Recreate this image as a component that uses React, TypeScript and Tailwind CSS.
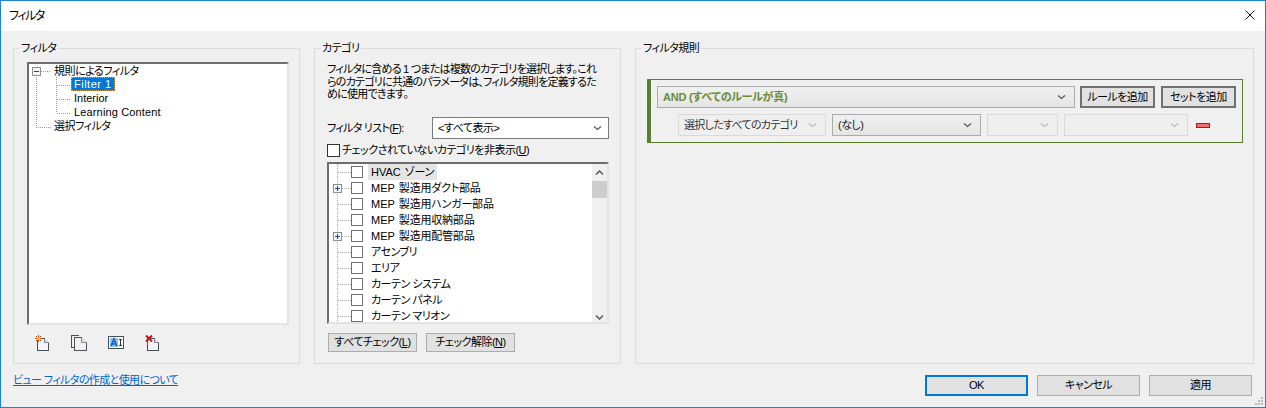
const FONT = "font-['Liberation_Sans','Noto_Sans_CJK_JP',sans-serif] [font-feature-settings:'palt']";

const categories = [
  { latin: "HVAC", label: "ゾーン", plus: false },
  { latin: "MEP", label: "製造用ダクト部品", plus: true },
  { latin: "MEP", label: "製造用ハンガー部品", plus: false },
  { latin: "MEP", label: "製造用収納部品", plus: false },
  { latin: "MEP", label: "製造用配管部品", plus: true },
  { latin: "", label: "アセンブリ", plus: false },
  { latin: "", label: "エリア", plus: false },
  { latin: "", label: "カーテン システム", plus: false },
  { latin: "", label: "カーテン パネル", plus: false },
  { latin: "", label: "カーテン マリオン", plus: false },
];

function Chevron({ color = "#555" }: { color?: string }) {
  return (
    <svg width="9" height="6" viewBox="0 0 9 6" className="shrink-0">
      <path d="M1 1.5 L4.5 4.5 L8 1.5" fill="none" stroke={color} strokeWidth="1.2" />
    </svg>
  );
}

function Button({ label, className }: { label: React.ReactNode; className: string }) {
  return (
    <button className={`flex items-center justify-center whitespace-nowrap bg-[#e1e1e1] text-black ${className}`}>
      {label}
    </button>
  );
}

function Combo({ label, width, disabled, className = "" }: { label?: string; width: string; disabled?: boolean; className?: string }) {
  return (
    <div
      className={`flex h-[22px] items-center justify-between whitespace-nowrap border pl-[5px] pr-[8px] ${width} ${
        disabled
          ? "border-[#d9d9d9] bg-[#efefef] text-[#333]"
          : "border-[#acacac] bg-gradient-to-b from-[#f0f0f0] to-[#e5e5e5] text-[#222]"
      } ${className}`}
    >
      <span>{label}</span>
      <Chevron color={disabled ? "#bbb" : "#555"} />
    </div>
  );
}

function Panel({ title, width, children }: { title: string; width: string; children: React.ReactNode }) {
  return (
    <fieldset className={`h-[324px] border border-[#dcdcdc] ${width}`}>
      <legend className="ml-[5px] px-[2px] leading-[16px] text-black">{title}</legend>
      {children}
    </fieldset>
  );
}

function FilterTree() {
  return (
    <div className="relative h-[263px] w-[262px] border-2 border-b-[#e3e3e3] border-l-[#6d6d6d] border-r-[#e3e3e3] border-t-[#6d6d6d] bg-white leading-[14px]">
      <svg className="absolute left-0 top-0" width="60" height="70" shapeRendering="crispEdges">
        <g stroke="#9a9a9a" strokeDasharray="1 1" fill="none">
          <path d="M7.5 11 V63.5 H23" />
          <path d="M12 7.5 H22" />
          <path d="M27.5 13 V49 M27.5 21.5 H41 M27.5 35.5 H41 M27.5 49.5 H41" />
        </g>
        <rect x="3.5" y="3.5" width="8" height="8" fill="#f6f6f6" stroke="#8f8f8f" />
        <path d="M5 7.5 H10" stroke="#2f3f8f" />
      </svg>
      <div className="h-[13px] pl-[25px]">規則によるフィルタ</div>
      <div className="ml-[42px] w-fit border border-dotted border-[#e8a050] bg-[#0078d7] px-[2px] leading-[12px] tracking-[0.5px] text-white">Filter 1</div>
      <div className="pl-[45px] tracking-[0px]">Interior</div>
      <div className="pl-[45px] tracking-[0.15px]">Learning Content</div>
      <div className="pl-[25px]">選択フィルタ</div>
    </div>
  );
}

function ToolIcons() {
  return (
    <div className="mt-[10px] flex items-start pl-[8px]">
      <svg width="16" height="17" viewBox="0 0 16 17" shapeRendering="crispEdges">
        <path d="M2.5 3.5 H9.5 L13.5 7.5 V15.5 H2.5 Z" fill="#f4f4f6" stroke="#4b5058" />
        <path d="M9.5 3.5 V7.5 H13.5" fill="#d5d8dc" stroke="#8b8f96" />
        <path d="M3.5 0 V7 M0 3.5 H7 M1 1 L6 6 M6 1 L1 6" stroke="#e04b10" />
        <rect x="2" y="2" width="3" height="3" fill="#ffc61a" />
      </svg>
      <svg className="ml-[20px]" width="16" height="17" viewBox="0 0 16 17" shapeRendering="crispEdges">
        <path d="M3.5 12.5 H0.5 V0.5 H7.5" fill="none" stroke="#4b5058" />
        <path d="M3.5 2.5 H10.5 L15.5 7.5 V15.5 H3.5 Z" fill="#f0f1f4" stroke="#4b5058" />
        <path d="M10.5 2.5 V7.5 H15.5" fill="#d5d8dc" stroke="#8b8f96" />
      </svg>
      <svg className="ml-[21px] mt-[1px]" width="17" height="14" viewBox="0 0 17 14" shapeRendering="crispEdges">
        <rect x="0.5" y="0.5" width="15" height="12" fill="#fff" stroke="#4b5058" />
        <rect x="2" y="2" width="8" height="9" fill="#8fc0ee" />
        <path d="M3.2 10 L6 3 L8.8 10 M4.2 8 H7.8" fill="none" stroke="#1566b8" strokeWidth="1.7" shapeRendering="auto" />
        <path d="M11 3.5 H14 M12.5 3.5 V9.5 M11 9.5 H14" stroke="#333" />
      </svg>
      <svg className="ml-[20px]" width="15" height="17" viewBox="0 0 15 17" shapeRendering="crispEdges">
        <path d="M2.5 3.5 H9.5 L13.5 7.5 V15.5 H2.5 Z" fill="#f4f4f6" stroke="#4b5058" />
        <path d="M9.5 3.5 V7.5 H13.5" fill="#d5d8dc" stroke="#8b8f96" />
        <path d="M1 0.5 L7 6.5 M7 0.5 L1 6.5" stroke="#c4161c" strokeWidth="2" shapeRendering="auto" />
      </svg>
    </div>
  );
}

function CategoryRow({ latin, label, plus, active }: { latin: string; label: string; plus: boolean; active: boolean }) {
  return (
    <div className="flex h-[16px] items-center pl-[4px]">
      <svg width="18" height="16" className="shrink-0" shapeRendering="crispEdges">
        <g stroke="#a6a6a6" strokeDasharray="1 1" fill="none">
          <path d="M4.5 0 V16" />
          <path d="M5 8.5 H18" />
        </g>
        {plus && (
          <g>
            <rect x="0.5" y="4.5" width="8" height="8" fill="#f4f4f4" stroke="#8f8f8f" />
            <path d="M2 8.5 H7 M4.5 6 V11" stroke="#2f3f9f" />
          </g>
        )}
      </svg>
      <span className="h-[12px] w-[12px] shrink-0 border border-[#707070] bg-white" />
      <span className={`ml-[5px] h-[16px] whitespace-nowrap px-[3px] leading-[16px] ${active ? "bg-[#e5e5e5]" : ""}`}>
        {latin && <span className="mr-[4px] tracking-[0px]">{latin}</span>}
        <span className={latin ? "tracking-[-0.2px]" : ""}>{label}</span>
      </span>
    </div>
  );
}

function CategoryList() {
  return (
    <div className="flex h-[162px] w-[282px] overflow-hidden border-2 border-b-[#e3e3e3] border-l-[#6d6d6d] border-r-[#e3e3e3] border-t-[#6d6d6d] bg-white">
      <div className="min-w-0 flex-1">
        {categories.map((c, i) => (
          <CategoryRow key={c.latin + c.label} latin={c.latin} label={c.label} plus={c.plus} active={i === 0} />
        ))}
      </div>
      <div className="flex w-[15px] shrink-0 flex-col items-center bg-[#f0f0f0]">
        <svg className="mt-[6px]" width="9" height="6" viewBox="0 0 9 6">
          <path d="M1 4.5 L4.5 1 L8 4.5" fill="none" stroke="#606060" strokeWidth="1.6" />
        </svg>
        <div className="mt-[5px] h-[17px] w-full bg-[#cdcdcd]" />
        <div className="flex-1" />
        <svg className="mb-[2px]" width="9" height="6" viewBox="0 0 9 6">
          <path d="M1 1.5 L4.5 5 L8 1.5" fill="none" stroke="#606060" strokeWidth="1.6" />
        </svg>
      </div>
    </div>
  );
}

export default function App() {
  return (
    <div className={`relative flex h-[408px] w-[1266px] flex-col overflow-hidden border border-[#1883d7] bg-[#f0f0f0] text-[11px] tracking-[-0.5px] text-black ${FONT}`}>
      <div className="flex h-[30px] shrink-0 items-center justify-between bg-white pl-[8px] pr-[10px] text-[12px] tracking-[-1.5px]">
        <span>フィルタ</span>
        <svg className="mb-[2px]" width="10" height="10" viewBox="0 0 10 10">
          <path d="M0.5 0.5 L9.5 9.5 M9.5 0.5 L0.5 9.5" stroke="#111" strokeWidth="1" />
        </svg>
      </div>

      <div className="mt-[9px] flex pl-[12px]">
        <Panel title="フィルタ" width="w-[287px]">
          <div className="pl-[13px] pt-[6px]">
            <FilterTree />
            <ToolIcons />
          </div>
        </Panel>

        <Panel title="カテゴリ" width="ml-[14px] w-[307px]">
          <div className="pl-[12px]">
            <p className="h-[48px] whitespace-nowrap pt-[7px] leading-[12.5px] tracking-[-0.75px]">
              フィルタに含める 1 つまたは複数のカテゴリを選択します。これ
              <br />
              らのカテゴリに共通のパラメータは、フィルタ規則を定義するた
              <br />
              めに使用できます。
            </p>
            <div className="mt-[13px] flex items-center">
              <span className="w-[105px] tracking-[-0.7px]">フィルタ リスト(<u>F</u>):</span>
              <div className="flex h-[22px] w-[177px] items-center justify-between border border-[#7a7a7a] bg-white pl-[5px] pr-[6px]">
                <span>&lt;すべて表示&gt;</span>
                <Chevron />
              </div>
            </div>
            <div className="mt-[4px] flex h-[15px] items-center">
              <span className="h-[13px] w-[13px] border border-[#333] bg-white" />
              <span className="ml-[2px]">チェックされていないカテゴリを非表示(<u>U</u>)</span>
            </div>
            <div className="mt-[4px]">
              <CategoryList />
            </div>
            <div className="ml-[1px] mt-[9px] flex gap-[9px]">
              <Button className="h-[19px] w-[89px] border border-[#adadad]" label={<>すべてチェック(<u>L</u>)</>} />
              <Button className="h-[19px] w-[89px] border border-[#adadad]" label={<>チェック解除(<u>N</u>)</>} />
            </div>
          </div>
        </Panel>

        <Panel title="フィルタ規則" width="ml-[14px] w-[619px]">
          <div className="pl-[11px] pt-[23px]">
            <div className="h-[64px] w-[596px] border border-l-[4px] border-[#5a7f2b] pl-[6px] pt-[6px]">
              <div className="flex">
                <Combo width="w-[418px]" label="AND (すべてのルールが真)" className="font-bold tracking-[-0.25px] !text-[#6b8a3a]" />
                <Button className="ml-[5px] h-[22px] w-[75px] border-2 border-[#707070]" label="ルールを追加" />
                <Button className="ml-[6px] h-[22px] w-[75px] border-2 border-[#707070]" label="セットを追加" />
              </div>
              <div className="mt-[6px] flex items-center pl-[21px]">
                <Combo width="w-[148px]" label="選択したすべてのカテゴリ" disabled className="tracking-[-0.7px]" />
                <Combo width="ml-[6px] w-[149px]" label="(なし)" />
                <Combo width="ml-[6px] w-[71px]" disabled />
                <Combo width="ml-[6px] w-[124px]" disabled />
                <div className="ml-[8px] h-[5px] w-[14px] border border-[#b01818] bg-[#f26d6d]" />
              </div>
            </div>
          </div>
        </Panel>
      </div>

      <div className="flex items-start justify-between pl-[12px] pr-[13px] pt-[11px]">
        <a className="leading-[10px] tracking-[-0.6px] text-[#0066cc] underline">ビュー フィルタの作成と使用について</a>
        <div className="flex gap-[9px]">
          <Button className="h-[21px] w-[103px] border-2 border-[#0078d7]" label="OK" />
          <Button className="h-[21px] w-[103px] border border-[#adadad]" label="キャンセル" />
          <Button className="h-[21px] w-[103px] border border-[#adadad]" label="適用" />
        </div>
      </div>

      <svg className="absolute bottom-[1px] right-[1px]" width="9" height="9" shapeRendering="crispEdges" fill="#b8b8b8">
        <rect x="6" y="0" width="2" height="2" />
        <rect x="3" y="3" width="2" height="2" />
        <rect x="6" y="3" width="2" height="2" />
        <rect x="0" y="6" width="2" height="2" />
        <rect x="3" y="6" width="2" height="2" />
        <rect x="6" y="6" width="2" height="2" />
      </svg>
    </div>
  );
}
